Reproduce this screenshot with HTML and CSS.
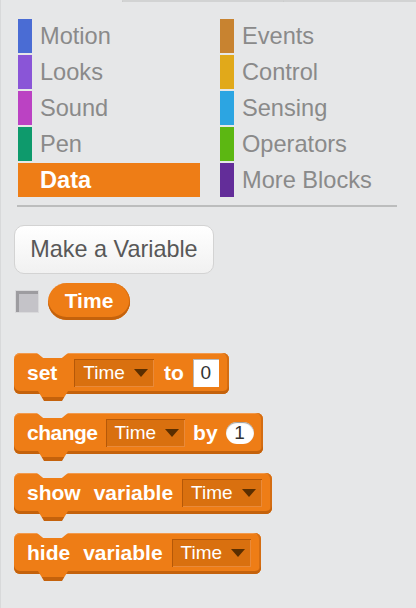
FILE: index.html
```html
<!DOCTYPE html>
<html>
<head>
<meta charset="utf-8">
<link rel="stylesheet" href="styles.css">
</head>
<body>
<div class="palette">
  <div class="tabs-edge"><div class="tab-a"></div><div class="tab-b"></div></div>

  <div class="cats">
    <div class="cat"><span class="sw motion"></span><span>Motion</span></div>
    <div class="cat"><span class="sw events"></span><span>Events</span></div>
    <div class="cat"><span class="sw looks"></span><span>Looks</span></div>
    <div class="cat"><span class="sw control"></span><span>Control</span></div>
    <div class="cat"><span class="sw sound"></span><span>Sound</span></div>
    <div class="cat"><span class="sw sensing"></span><span>Sensing</span></div>
    <div class="cat"><span class="sw pen"></span><span>Pen</span></div>
    <div class="cat"><span class="sw operators"></span><span>Operators</span></div>
    <div class="cat active"><span class="sw data"></span><span>Data</span></div>
    <div class="cat"><span class="sw more"></span><span>More Blocks</span></div>
  </div>

  <div class="sep"></div>

  <div class="btn">Make a Variable</div>

  <div class="var-row">
    <span class="check"></span>
    <span class="reporter">Time</span>
  </div>

  <div class="blocks">
    <div class="block">
      <span class="lbl">set</span>
      <span class="dd wide-l"><span>Time</span><span class="arrow"></span></span>
      <span class="lbl tight-l">to</span>
      <span class="num-sq">0</span>
    </div>
    <div class="block change">
      <span class="lbl condensed">change</span>
      <span class="dd"><span>Time</span><span class="arrow"></span></span>
      <span class="lbl">by</span>
      <span class="num-rd">1</span>
    </div>
    <div class="block">
      <span class="lbl">show</span>
      <span class="lbl word">variable</span>
      <span class="dd"><span>Time</span><span class="arrow"></span></span>
    </div>
    <div class="block">
      <span class="lbl">hide</span>
      <span class="lbl word">variable</span>
      <span class="dd"><span>Time</span><span class="arrow"></span></span>
    </div>
  </div>
</div>
</body>
</html>
```

FILE: styles.css
```css
html, body {
  margin: 0;
  padding: 0;
  background: #e6e7e8;
}
body {
  font-family: "Liberation Sans", Arial, sans-serif;
  width: 416px;
  height: 608px;
  overflow: hidden;
}
.palette {
  height: 608px;
  border-left: 1px solid #d8d9da;
  box-sizing: border-box;
}

/* top tab edge */
.tabs-edge {
  display: flex;
  margin-left: 121px;
  height: 2px;
}
.tab-a, .tab-b {
  border-top: 2px solid #d2d3d3;
  border-left: 1px solid #c9caca;
  box-sizing: border-box;
  height: 2px;
}
.tab-a { width: 161px; }
.tab-b { flex: 1; }

/* categories */
.cats {
  display: grid;
  grid-template-columns: 182px 180px;
  column-gap: 20px;
  row-gap: 2px;
  margin: 17px 0 0 17px;
}
.cat {
  display: flex;
  align-items: center;
  height: 34px;
  font-size: 23.6px;
  color: #8a8a8a;
}
.sw {
  width: 14px;
  height: 34px;
  margin-right: 8px;
  flex: none;
}
.motion { background: #4a6cd4; }
.looks { background: #8a55d7; }
.sound { background: #bb42c3; }
.pen { background: #0e9a6c; }
.data { background: #ee7d16; }
.events { background: #c88330; }
.control { background: #e1a91a; }
.sensing { background: #2ca5e2; }
.operators { background: #5cb712; }
.more { background: #632d99; }
.cat.active {
  background: #ee7d16;
  color: #fff;
  font-weight: bold;
}

.sep {
  margin: 8px 0 0 16px;
  width: 380px;
  height: 2px;
  background: #bcbdbd;
}

/* button */
.btn {
  margin: 18px 0 0 13px;
  width: 200px;
  height: 49px;
  box-sizing: border-box;
  border: 1px solid #d3d3d3;
  border-radius: 10px;
  background: linear-gradient(#ffffff, #f1f1f1);
  display: flex;
  align-items: center;
  justify-content: center;
  font-size: 23.4px;
  color: #585858;
}

/* variable row */
.var-row {
  display: flex;
  align-items: center;
  gap: 9px;
  margin: 9px 0 0 14px;
  height: 37px;
}
.check {
  width: 24px;
  height: 23px;
  box-sizing: border-box;
  border: 1px solid #d9d9db;
  background: #c4c3c8;
  box-shadow: inset 3px 3px 0 #9d9ca0;
}
.reporter {
  height: 37px;
  width: 82px;
  box-sizing: border-box;
  border-radius: 19px;
  background: #ee7d16;
  box-shadow: inset 0 -3px 0 #c4620c, inset -1px 0 0 #d86f12;
  color: #fff;
  font-weight: bold;
  font-size: 21px;
  display: flex;
  align-items: center;
  justify-content: center;
  padding-bottom: 1px;
}

/* blocks */
.blocks {
  margin: 33px 0 0 13px;
  display: flex;
  flex-direction: column;
  align-items: flex-start;
  gap: 19px;
}
.block {
  position: relative;
  display: flex;
  align-items: center;
  gap: 9px;
  height: 41px;
  box-sizing: border-box;
  padding: 0 10px 2px 13px;
  background: #ee7d16;
  border-radius: 6px;
  box-shadow: inset 0 -3px 0 #c4620c, inset -2px 0 0 #d46d12, inset 0 1px 0 #f39a4c;
  color: #fff;
  font-weight: bold;
  font-size: 21px;
}
.block::before {
  content: "";
  position: absolute;
  top: 0;
  left: 23px;
  width: 31px;
  height: 5px;
  background: #e6e7e8;
  clip-path: polygon(0 0, 100% 0, 80% 100%, 20% 100%);
}
.block::after {
  content: "";
  position: absolute;
  top: calc(100% - 3px);
  left: 24px;
  width: 30px;
  height: 10px;
  background: linear-gradient(#ee7d16 0 6px, #c4620c 6px);
  clip-path: polygon(0 0, 100% 0, 80% 100%, 20% 100%);
}
.block.change {
  gap: 8px;
  padding-right: 9px;
}
.condensed { letter-spacing: -0.5px; }
.lbl { line-height: 1; }
.word { margin-left: 4px; }
.wide-l { margin-left: 8px; }
.tight-l { margin-left: 1px; }

.dd {
  display: flex;
  align-items: center;
  gap: 9px;
  height: 28px;
  box-sizing: border-box;
  padding: 0 6px 0 9px;
  background: #d9700f;
  box-shadow: inset 1px 1px 0 #b55808, inset -1px -1px 0 #e98a3a;
  font-weight: normal;
  font-size: 19px;
  color: #fff;
}
.arrow {
  width: 0;
  height: 0;
  border-left: 7px solid transparent;
  border-right: 7px solid transparent;
  border-top: 8px solid #5a2e00;
}
.num-sq {
  width: 26px;
  height: 28px;
  box-sizing: border-box;
  background: #fff;
  box-shadow: inset 1px 1px 0 #b9b9b9;
  color: #333;
  font-weight: normal;
  font-size: 19px;
  display: flex;
  align-items: center;
  justify-content: center;
}
.num-rd {
  width: 28px;
  height: 22px;
  box-sizing: border-box;
  border-radius: 11px;
  background: #fff;
  box-shadow: inset 0 1px 1px #9a9a9a;
  color: #333;
  font-weight: normal;
  font-size: 19px;
  display: flex;
  align-items: center;
  justify-content: center;
}
```
